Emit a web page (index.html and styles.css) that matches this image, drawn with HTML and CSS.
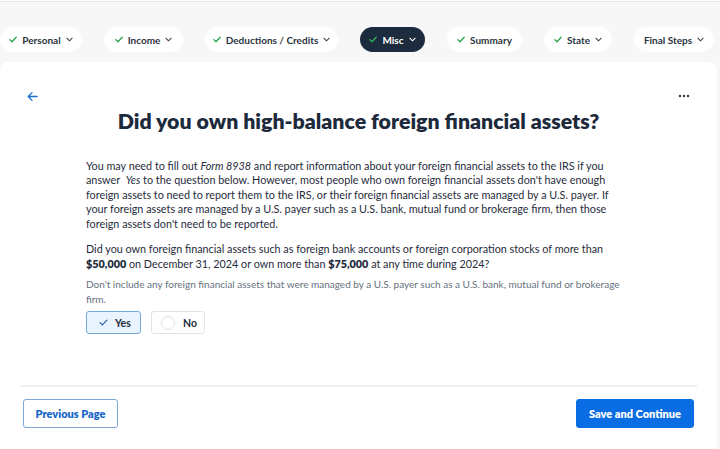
FILE: index.html
```html
<!DOCTYPE html>
<html lang="en">
<head>
<meta charset="utf-8">
<title>Foreign financial assets</title>
<link rel="stylesheet" href="styles.css">
</head>
<body>
<div class="page">
  <nav class="steps">
    <div class="pill p-personal"><svg class="chk" viewBox="0 0 10 8"><path d="M1 4.2 L3.7 6.8 L9 1.2"/></svg><span>Personal</span><svg class="chev" viewBox="0 0 8 5"><path d="M1 1 L4 4 L7 1"/></svg></div>
    <div class="pill p-income"><svg class="chk" viewBox="0 0 10 8"><path d="M1 4.2 L3.7 6.8 L9 1.2"/></svg><span>Income</span><svg class="chev" viewBox="0 0 8 5"><path d="M1 1 L4 4 L7 1"/></svg></div>
    <div class="pill p-ded"><svg class="chk" viewBox="0 0 10 8"><path d="M1 4.2 L3.7 6.8 L9 1.2"/></svg><span>Deductions / Credits</span><svg class="chev" viewBox="0 0 8 5"><path d="M1 1 L4 4 L7 1"/></svg></div>
    <div class="pill active p-misc"><svg class="chk" viewBox="0 0 10 8"><path d="M1 4.2 L3.7 6.8 L9 1.2"/></svg><span>Misc</span><svg class="chev" viewBox="0 0 8 5"><path d="M1 1 L4 4 L7 1"/></svg></div>
    <div class="pill p-sum"><svg class="chk" viewBox="0 0 10 8"><path d="M1 4.2 L3.7 6.8 L9 1.2"/></svg><span>Summary</span></div>
    <div class="pill p-state"><svg class="chk" viewBox="0 0 10 8"><path d="M1 4.2 L3.7 6.8 L9 1.2"/></svg><span>State</span><svg class="chev" viewBox="0 0 8 5"><path d="M1 1 L4 4 L7 1"/></svg></div>
    <div class="pill p-final"><span>Final Steps</span><svg class="chev" viewBox="0 0 8 5"><path d="M1 1 L4 4 L7 1"/></svg></div>
  </nav>

  <main class="card">
    <div class="card-head">
      <svg class="back" viewBox="0 0 12 12"><path d="M11 6 H1.5 M5.5 1.8 L1.3 6 L5.5 10.2"/></svg>
      <svg class="more" viewBox="0 0 12 4"><circle cx="2" cy="2" r="1.2"/><circle cx="6" cy="2" r="1.2"/><circle cx="10" cy="2" r="1.2"/></svg>
    </div>
    <h1 class="title">Did you own high-balance foreign financial assets?</h1>
    <div class="content">
      <p class="para">You may need to fill out <em>Form 8938</em> and report information about your foreign financial assets to the IRS if you answer <em class="gap">Yes</em> to the question below. However, most people who own foreign financial assets don't have enough foreign assets to need to report them to the IRS, or their foreign financial assets are managed by a U.S. payer. If your foreign assets are managed by a U.S. payer such as a U.S. bank, mutual fund or brokerage firm, then those foreign assets don't need to be reported.</p>
      <p class="question">Did you own foreign financial assets such as foreign bank accounts or foreign corporation stocks of more than <strong>$50,000</strong> on December 31, 2024 or own more than <strong>$75,000</strong> at any time during 2024?</p>
      <p class="hint">Don't include any foreign financial assets that were managed by a U.S. payer such as a U.S. bank, mutual fund or brokerage firm.</p>
      <div class="choices">
        <button class="choice selected"><svg class="ychk" viewBox="0 0 10 8"><path d="M1 4.2 L3.7 6.8 L9 1.2"/></svg><span>Yes</span></button>
        <button class="choice"><span class="radio"></span><span>No</span></button>
      </div>
    </div>
    <hr class="divider">
    <div class="footer">
      <button class="btn-secondary">Previous Page</button>
      <button class="btn-primary">Save and Continue</button>
    </div>
  </main>
</div>
</body>
</html>
```

FILE: styles.css
```css
* { box-sizing: border-box; }
html, body { margin: 0; padding: 0; }
body {
  font-family: Lato, "Noto Sans", "Liberation Sans", sans-serif;
  background: #f7f7f7;
  color: #1f2c3c;
  width: 720px;
  height: 449px;
  overflow: hidden;
}
.page {
  border-top: 1px solid #ffffff;
  display: flex;
  flex-direction: column;
  height: 449px;
}
.page::before {
  content: "";
  display: block;
  height: 1px;
  background: #e6e6e6;
}
.steps {
  display: flex;
  gap: 22px;
  padding: 25px 0 10px 0;
  white-space: nowrap;
}
.pill {
  height: 25px;
  background: #ffffff;
  border-radius: 13px;
  display: flex;
  align-items: center;
  justify-content: center;
  gap: 5px;
  font-size: 10px;
  font-weight: 700;
  color: #2b3440;
  flex: none;
}
.p-personal { width: 82px; }
.p-income { width: 79px; }
.p-ded { width: 133px; }
.p-misc { width: 65px; }
.p-sum { width: 75px; }
.p-state { width: 68px; }
.p-final { width: 80px; }
.pill.active { background: #1d2b3e; color: #ffffff; }
.chk { width: 8px; height: 7px; fill: none; stroke: #26a24b; stroke-width: 1.6; stroke-linecap: round; stroke-linejoin: round; }
.chev { width: 7px; height: 5px; fill: none; stroke: #3b4450; stroke-width: 1.2; stroke-linecap: round; stroke-linejoin: round; }
.pill.active .chev { stroke: #ffffff; }
.pill.active .chk { stroke: #34b35a; }

.card {
  flex: 1;
  width: 717px;
  background: #ffffff;
  border-top-left-radius: 8px;
  border-top-right-radius: 8px;
  display: flex;
  flex-direction: column;
}
.card-head {
  display: flex;
  justify-content: space-between;
  align-items: center;
  padding: 28px 27px 0 27px;
  height: 40px;
}
.back { width: 11px; height: 11px; fill: none; stroke: #1a6fd1; stroke-width: 1.4; stroke-linecap: round; stroke-linejoin: round; }
.more { width: 12px; height: 4px; fill: #2f3947; }
.title {
  margin: 0;
  margin-top: 7px;
  text-align: center;
  font-size: 21.3px;
  line-height: 24px;
  font-weight: 800;
  color: #1c2a3b;
}
.content {
  width: 545px;
  margin: 0 auto;
  padding-top: 25.5px;
}
.para, .question {
  margin: 0;
  font-size: 10.8px;
  line-height: 14.5px;
  color: #1f2c3c;
}
.gap { margin-left: 3px; }
.question { margin-top: 11px; }
.question strong { font-weight: 800; }
.hint {
  margin: 6px 0 0 0;
  font-size: 10px;
  line-height: 14.5px;
  color: #66717d;
}
.choices {
  display: flex;
  gap: 10px;
  margin-top: 5px;
}
.choice {
  height: 23px;
  border: 1px solid #e0e3e7;
  border-radius: 3px;
  background: #ffffff;
  font-family: inherit;
  font-size: 10.5px;
  font-weight: 700;
  color: #1f2c3c;
  display: flex;
  align-items: center;
  padding: 0;
  cursor: pointer;
}
.choice.selected {
  width: 55px;
  background: #eaf4fe;
  border-color: #73a9df;
  padding-left: 12px;
  gap: 7px;
}
.choice:not(.selected) {
  width: 54px;
  padding-left: 9px;
  gap: 8px;
}
.ychk { width: 9px; height: 7px; fill: none; stroke: #1f5fa8; stroke-width: 1.3; stroke-linecap: round; stroke-linejoin: round; }
.radio {
  width: 14px;
  height: 14px;
  border-radius: 50%;
  border: 1px solid #dcdfe3;
  background: #fff;
}
.divider {
  border: none;
  height: 2px;
  background: #efefef;
  margin: 51px 20px 0 20px;
}
.footer {
  display: flex;
  justify-content: space-between;
  padding: 12px 23px 0 23px;
}
.btn-secondary, .btn-primary {
  height: 29px;
  border-radius: 3px;
  font-family: inherit;
  font-size: 11px;
  font-weight: 800;
  cursor: pointer;
}
.btn-secondary {
  width: 95px;
  background: #ffffff;
  border: 1px solid #7ea8d8;
  color: #1766c9;
}
.btn-primary {
  width: 118px;
  background: #0a6de3;
  border: 1px solid #0a6de3;
  color: #ffffff;
}
```
